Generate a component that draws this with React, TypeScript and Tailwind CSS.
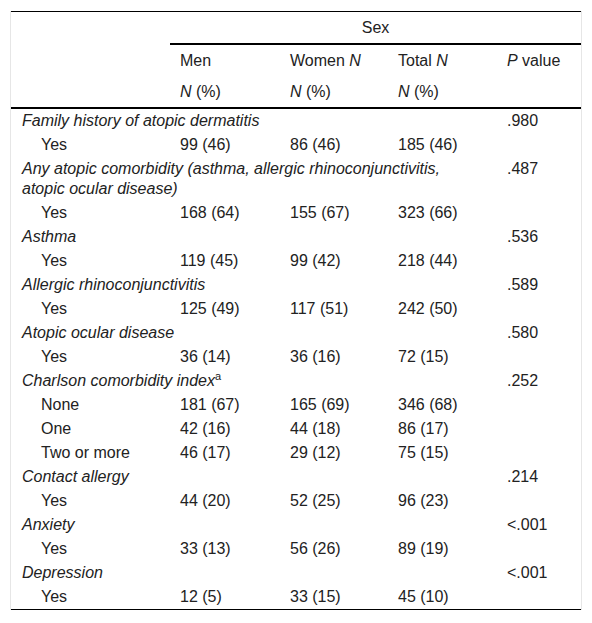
import React from "react";

type Row = {
  label: string;
  sub?: boolean;
  men?: string;
  women?: string;
  total?: string;
  p?: string;
  sup?: string;
};

const rows: Row[] = [
  { label: "Family history of atopic dermatitis", p: ".980" },
  { label: "Yes", sub: true, men: "99 (46)", women: "86 (46)", total: "185 (46)" },
  {
    label: "Any atopic comorbidity (asthma, allergic rhinoconjunctivitis, atopic ocular disease)",
    p: ".487",
  },
  { label: "Yes", sub: true, men: "168 (64)", women: "155 (67)", total: "323 (66)" },
  { label: "Asthma", p: ".536" },
  { label: "Yes", sub: true, men: "119 (45)", women: "99 (42)", total: "218 (44)" },
  { label: "Allergic rhinoconjunctivitis", p: ".589" },
  { label: "Yes", sub: true, men: "125 (49)", women: "117 (51)", total: "242 (50)" },
  { label: "Atopic ocular disease", p: ".580" },
  { label: "Yes", sub: true, men: "36 (14)", women: "36 (16)", total: "72 (15)" },
  { label: "Charlson comorbidity index", sup: "a", p: ".252" },
  { label: "None", sub: true, men: "181 (67)", women: "165 (69)", total: "346 (68)" },
  { label: "One", sub: true, men: "42 (16)", women: "44 (18)", total: "86 (17)" },
  { label: "Two or more", sub: true, men: "46 (17)", women: "29 (12)", total: "75 (15)" },
  { label: "Contact allergy", p: ".214" },
  { label: "Yes", sub: true, men: "44 (20)", women: "52 (25)", total: "96 (23)" },
  { label: "Anxiety", p: "<.001" },
  { label: "Yes", sub: true, men: "33 (13)", women: "56 (26)", total: "89 (19)" },
  { label: "Depression", p: "<.001" },
  { label: "Yes", sub: true, men: "12 (5)", women: "33 (15)", total: "45 (10)" },
];

const App = () => {
  return (
    <div className="bg-white w-[592px] h-[623px] pt-[11px] pl-[10px] font-['Liberation_Sans',Arial,sans-serif] text-[16px] text-[#222]">
      <div className="w-[572px] border-x border-[#e6e6e6]">
        <table className="table-fixed w-[570px] border-separate border-spacing-0">
          <colgroup>
            <col className="w-[159px]" />
            <col className="w-[110px]" />
            <col className="w-[108px]" />
            <col className="w-[109px]" />
            <col className="w-[84px]" />
          </colgroup>
          <thead className="leading-[20px]">
            <tr>
              <th rowSpan={3} className="border-t border-b-2 border-black" />
              <th
                colSpan={4}
                className="h-[34px] border-t border-b-2 border-black font-normal text-center p-0"
              >
                Sex
              </th>
            </tr>
            <tr>
              <th className="h-[31px] font-normal text-left pl-[10px] p-0">Men</th>
              <th className="font-normal text-left pl-[10px] p-0">
                Women <i>N</i>
              </th>
              <th className="font-normal text-left pl-[10px] p-0">
                Total <i>N</i>
              </th>
              <th className="font-normal text-left pl-[10px] p-0">
                <i>P</i> value
              </th>
            </tr>
            <tr>
              <th className="h-[33px] border-b-2 border-black font-normal text-left pl-[10px] p-0">
                <i>N</i> (%)
              </th>
              <th className="border-b-2 border-black font-normal text-left pl-[10px] p-0">
                <i>N</i> (%)
              </th>
              <th className="border-b-2 border-black font-normal text-left pl-[10px] p-0">
                <i>N</i> (%)
              </th>
              <th className="border-b-2 border-black p-0" />
            </tr>
          </thead>
          <tbody className="leading-[20px]">
            {rows.map((r, i) => {
              const last = i === rows.length - 1;
              const b = last ? "border-b border-black" : "";
              if (!r.sub) {
                return (
                  <tr key={i}>
                    <td colSpan={4} className={`py-[2px] pl-[11px] pr-[10px] align-top italic ${b}`}>
                      {r.label}
                      {r.sup && (
                        <span className="text-[11px] leading-none not-italic relative -top-[6px]">
                          {r.sup}
                        </span>
                      )}
                    </td>
                    <td className={`py-[2px] pl-[10px] align-top ${b}`}>{r.p}</td>
                  </tr>
                );
              }
              return (
                <tr key={i}>
                  <td className={`py-[2px] pl-[30px] ${b}`}>{r.label}</td>
                  <td className={`py-[2px] pl-[10px] ${b}`}>{r.men}</td>
                  <td className={`py-[2px] pl-[10px] ${b}`}>{r.women}</td>
                  <td className={`py-[2px] pl-[10px] ${b}`}>{r.total}</td>
                  <td className={`py-[2px] pl-[10px] ${b}`}>{r.p}</td>
                </tr>
              );
            })}
          </tbody>
        </table>
      </div>
    </div>
  );
};

export default App;
